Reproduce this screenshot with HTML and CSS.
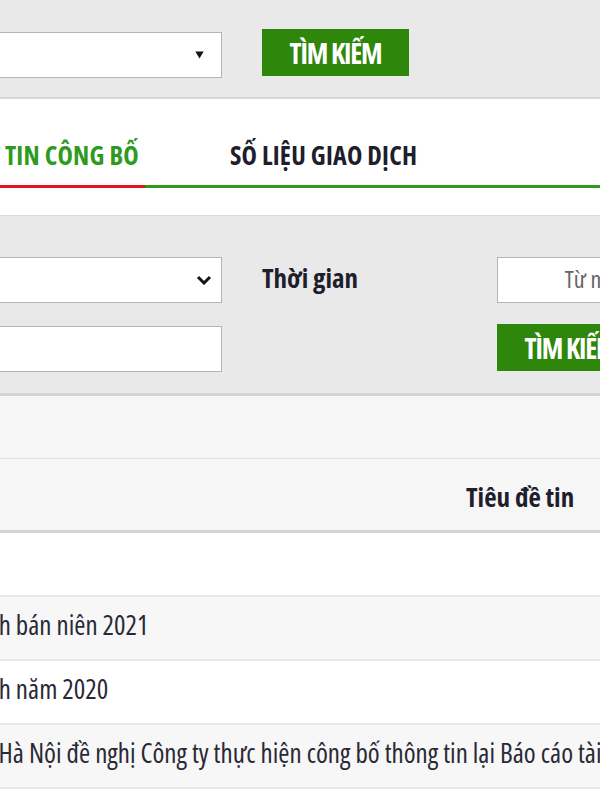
FILE: index.html
```html
<!DOCTYPE html>
<html lang="vi">
<head>
<meta charset="utf-8">
<title>Tin công bố</title>
<link rel="stylesheet" href="styles.css">
</head>
<body>
<div class="page">
  <section class="search-bar">
    <div class="select select-stock">
      <svg class="tri" width="9" height="8" viewBox="0 0 9 8"><path d="M0.3 0.5h8.4l-4.2 7z" fill="#151515"/></svg>
    </div>
    <button class="btn">TÌM KIẾM</button>
  </section>

  <nav class="tabs">
    <a class="tab active" href="#">TIN CÔNG BỐ</a>
    <a class="tab" href="#">SỐ LIỆU GIAO DỊCH</a>
  </nav>

  <section class="filter">
    <div class="select select-type">
      <svg width="16" height="10" viewBox="0 0 16 10"><path d="M2 2l6 6 6-6" fill="none" stroke="#151515" stroke-width="3"/></svg>
    </div>
    <div class="label">Thời gian</div>
    <div class="field date">Từ ngày</div>
    <div class="field"></div>
    <button class="btn btn-filter">TÌM KIẾM</button>
  </section>

  <section class="news">
    <div class="news-caption"></div>
    <div class="thead"><span class="th">Tiêu đề tin</span></div>
    <div class="rows">
      <div class="row">Nghị quyết</div>
      <div class="row">Báo cáo tài chính bán niên 2021</div>
      <div class="row">Báo cáo tài chính năm 2020</div>
      <div class="row">Ý kiến Sở GDCK Hà Nội đề nghị Công ty thực hiện công bố thông tin lại Báo cáo tài chính năm 2020</div>
    </div>
  </section>
</div>
</body>
</html>
```
FILE: styles.css
```css
html, body {
  margin: 0;
  overflow: hidden;
  background: #fff;
}
body {
  font-family: "Open Sans", "Noto Sans", sans-serif;
  font-stretch: 75%;
  color: #1e1e2c;
}
.page {
  margin-left: -150px;
  width: 900px;
}

/* top search bar */
.search-bar {
  box-sizing: border-box;
  height: 99px;
  background: #e9e9e9;
  border-bottom: 2px solid #d7d7d7;
  padding: 29px 0 0 80px;
  display: flex;
  align-items: flex-start;
  gap: 40px;
}
.select, .field {
  box-sizing: border-box;
  height: 46px;
  background: #fff;
  border: 1px solid #b5b5b5;
}
.select {
  width: 292px;
  display: flex;
  align-items: center;
  justify-content: flex-end;
}
.select-stock {
  margin-top: 3px;
  padding-right: 17px;
}
.select-type {
  padding-right: 9px;
}
.btn {
  box-sizing: border-box;
  width: 147px;
  height: 47px;
  padding: 0;
  border: 0;
  background: #2e860a;
  color: #fff;
  font-family: inherit;
  font-stretch: 75%;
  font-weight: 700;
  font-size: 28px;
  letter-spacing: -1.2px;
  display: flex;
  align-items: center;
  justify-content: center;
}

/* tabs */
.tabs {
  display: flex;
  padding: 41px 0 0 149px;
  border-bottom: 3px solid #2c9a1d;
  margin-bottom: 27px;
}
.tab {
  padding: 0 6px 15px;
  margin-bottom: -3px;
  border-bottom: 3px solid transparent;
  font-size: 26px;
  font-weight: 700;
  letter-spacing: 0.2px;
  line-height: 30px;
  color: #1e1e2c;
  text-decoration: none;
}
.tab + .tab {
  margin-left: 79px;
}
.tab.active {
  color: #2e9a1f;
  border-bottom-color: #e5151b;
}

/* filter */
.filter {
  background: #e9e9e9;
  border-top: 1px solid #dcdcdc;
  border-bottom: 3px solid #d5d5d5;
  padding: 41px 0 21px 80px;
  display: grid;
  grid-template-columns: 292px 195px 200px;
  column-gap: 40px;
  row-gap: 23px;
}
.label {
  font-size: 27px;
  font-weight: 700;
  line-height: 41px;
}
.field.date {
  text-align: center;
  font-size: 24px;
  line-height: 42px;
  color: #666;
}
.btn-filter {
  grid-column: 3;
  margin-top: -2px;
}

/* news table */
.news {
  background: #f6f6f6;
}
.news-caption {
  height: 62px;
  border-bottom: 1px solid #e2e2e2;
}
.thead {
  height: 74px;
  box-sizing: border-box;
  border-bottom: 3px solid #d3d3d3;
  padding: 20px 0 0 616px;
  font-size: 27px;
  font-weight: 700;
  line-height: 36px;
}
.rows {
  background: #fff;
}
.row {
  height: 62px;
  padding-left: 3px;
  border-bottom: 2px solid #e8e8e8;
  font-size: 27px;
  line-height: 55px;
  white-space: nowrap;
  color: #2a2a36;
}
.row:nth-child(even) {
  background: #f7f7f7;
}
```
